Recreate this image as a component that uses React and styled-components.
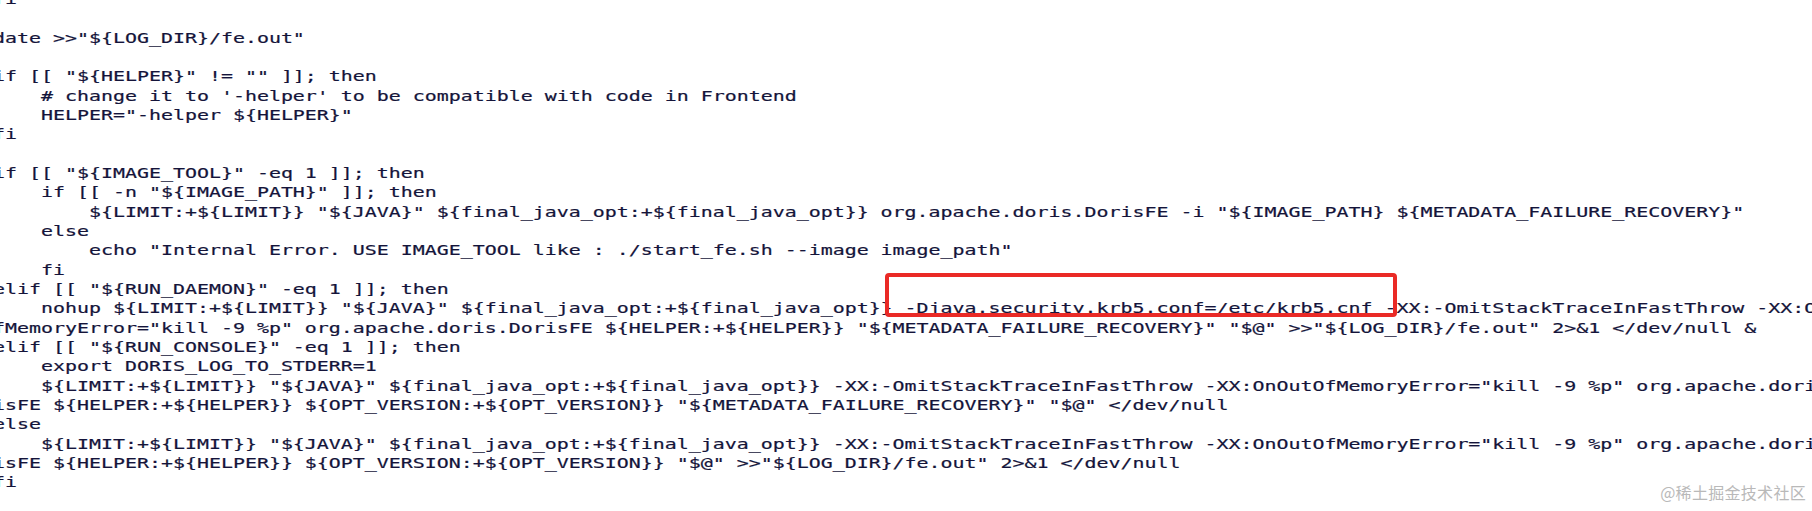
import React from "react";
import styled, { createGlobalStyle } from "styled-components";

const GlobalStyle = createGlobalStyle`
  html, body {
    margin: 0;
    padding: 0;
    background: #ffffff;
    overflow: hidden;
  }
`;

const Screen = styled.div`
  position: relative;
  width: 1812px;
  height: 511px;
  overflow: hidden;
  background: #ffffff;
`;

// terminal text: Lucida-like wide mono, 12px cell, 19.33px rows
const Code = styled.pre`
  margin: -11px 0 0 -7px;
  font-family: "DejaVu Sans Mono", "Liberation Mono", monospace;
  font-size: 14.6px;
  line-height: 19.33px;
  color: #14143a;
  -webkit-text-stroke: 0.2px #14143a;
  white-space: pre;
  transform: scaleX(1.3652);
  transform-origin: 0 0;
`;

const Line = styled.div`
  height: 19.33px;
`;

const Highlight = styled.div`
  position: absolute;
  left: 885px;
  top: 273px;
  width: 512px;
  height: 44px;
  box-sizing: border-box;
  border: 4px solid #ea2a26;
  border-radius: 4px;
`;

const Watermark = styled.div`
  position: absolute;
  right: 6px;
  bottom: 9px;
  font-family: "Noto Sans CJK SC", "Noto Sans", sans-serif;
  font-size: 16px;
  line-height: 20px;
  color: #b9b9b9;
  letter-spacing: 0.3px;
`;

const limitJava = '${LIMIT:+${LIMIT}} "${JAVA}" ${final_java_opt:+${final_java_opt}}';

const lines = [
  "fi",
  "",
  'date >>"${LOG_DIR}/fe.out"',
  "",
  'if [[ "${HELPER}" != "" ]]; then',
  "    # change it to '-helper' to be compatible with code in Frontend",
  '    HELPER="-helper ${HELPER}"',
  "fi",
  "",
  'if [[ "${IMAGE_TOOL}" -eq 1 ]]; then',
  '    if [[ -n "${IMAGE_PATH}" ]]; then',
  `        ${limitJava} org.apache.doris.DorisFE -i "\${IMAGE_PATH} \${METADATA_FAILURE_RECOVERY}"`,
  "    else",
  '        echo "Internal Error. USE IMAGE_TOOL like : ./start_fe.sh --image image_path"',
  "    fi",
  'elif [[ "${RUN_DAEMON}" -eq 1 ]]; then',
  `    nohup ${limitJava} -Djava.security.krb5.conf=/etc/krb5.cnf -XX:-OmitStackTraceInFastThrow -XX:OnOutO`,
  'fMemoryError="kill -9 %p" org.apache.doris.DorisFE ${HELPER:+${HELPER}} "${METADATA_FAILURE_RECOVERY}" "$@" >>"${LOG_DIR}/fe.out" 2>&1 </dev/null &',
  'elif [[ "${RUN_CONSOLE}" -eq 1 ]]; then',
  "    export DORIS_LOG_TO_STDERR=1",
  `    ${limitJava} -XX:-OmitStackTraceInFastThrow -XX:OnOutOfMemoryError="kill -9 %p" org.apache.doris.Dor`,
  'isFE ${HELPER:+${HELPER}} ${OPT_VERSION:+${OPT_VERSION}} "${METADATA_FAILURE_RECOVERY}" "$@" </dev/null',
  "else",
  `    ${limitJava} -XX:-OmitStackTraceInFastThrow -XX:OnOutOfMemoryError="kill -9 %p" org.apache.doris.Dor`,
  'isFE ${HELPER:+${HELPER}} ${OPT_VERSION:+${OPT_VERSION}} "$@" >>"${LOG_DIR}/fe.out" 2>&1 </dev/null',
  "fi",
];

const App = () => {
  return (
    <Screen>
      <GlobalStyle />
      <Code>
        {lines.map((text, index) => (
          <Line key={index}>{text}</Line>
        ))}
      </Code>
      <Highlight />
      <Watermark>@稀土掘金技术社区</Watermark>
    </Screen>
  );
};

export default App;
